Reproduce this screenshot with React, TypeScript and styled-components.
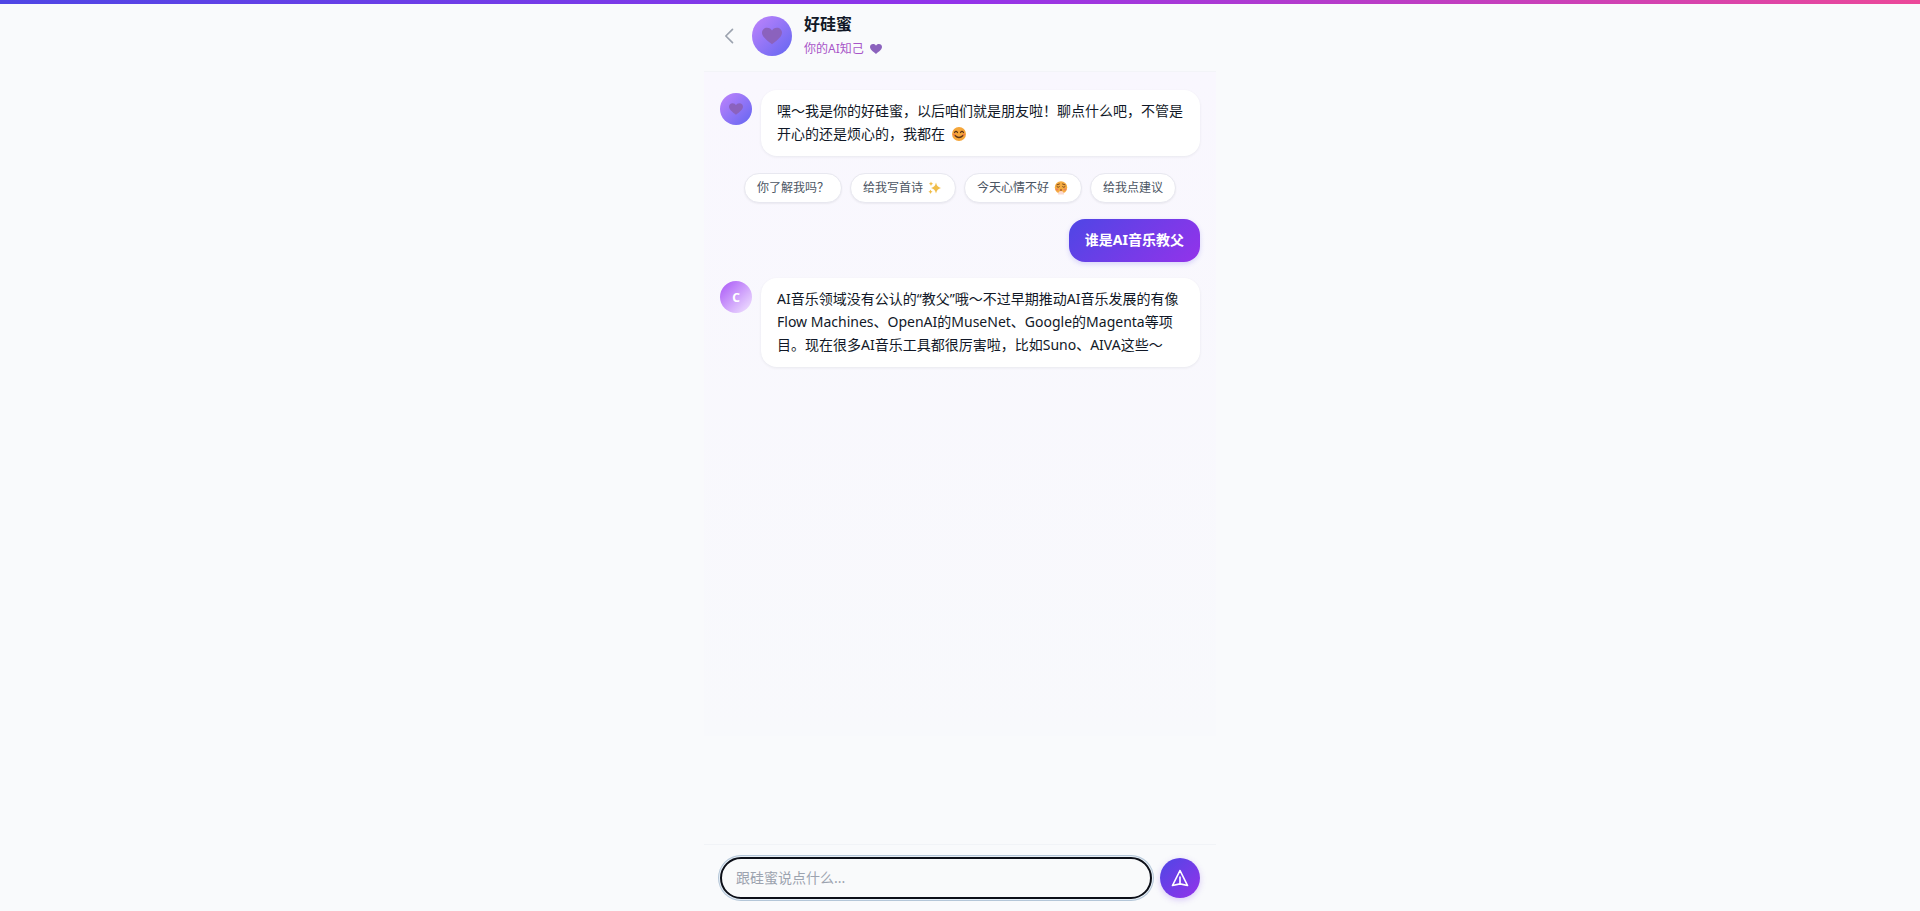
import React from "react";
import styled, { createGlobalStyle, css } from "styled-components";

const Global = createGlobalStyle`
  *, *::before, *::after { box-sizing: border-box; }
  body {
    margin: 0;
    background: #f9fafc;
    color: #111827;
    font-family: "Noto Sans", "Noto Sans CJK SC", sans-serif;
    font-size: 14px;
    line-height: 23px;
  }
  button, input { font: inherit; }
`;

const Page = styled.div`
  display: flex;
  flex-direction: column;
  min-height: 100vh;
`;

const TopBar = styled.div`
  height: 4px;
  background: linear-gradient(90deg, #4f46e5, #9333ea 50%, #ec4899);
`;

const Column = styled.div`
  display: flex;
  flex-direction: column;
  flex: 1;
  width: 100%;
  max-width: 512px;
  margin: 0 auto;
`;

const Header = styled.header`
  display: flex;
  align-items: center;
  gap: 12px;
  padding: 7px 16px 10px;
  border-bottom: 1px solid #f3f4f8;
`;

const BackButton = styled.button`
  display: flex;
  width: 20px;
  padding: 0;
  border: 0;
  background: none;
  color: #9ca3af;
  cursor: pointer;
`;

const Titles = styled.div`
  display: flex;
  flex-direction: column;
`;

const Name = styled.h1`
  margin: 0;
  font-size: 16px;
  line-height: 26px;
  font-weight: 700;
`;

const Tagline = styled.p`
  display: flex;
  align-items: center;
  gap: 6px;
  margin: 0;
  font-size: 12px;
  line-height: 24px;
  color: #a855c8;
`;

const Avatar = styled.span<{ $large?: boolean; $pale?: boolean }>`
  display: flex;
  flex: none;
  align-items: center;
  justify-content: center;
  width: ${(p) => (p.$large ? 40 : 32)}px;
  height: ${(p) => (p.$large ? 40 : 32)}px;
  border-radius: 50%;
  background: ${(p) =>
    p.$pale
      ? "linear-gradient(135deg, #a855f7, #f3e8ff)"
      : "linear-gradient(135deg, #c084fc, #6366f1)"};
  color: #fff;
  font-size: 12px;
  font-weight: 700;
`;

const Chat = styled.main`
  flex: 1;
  display: flex;
  flex-direction: column;
  gap: 16px;
  padding: 18px 16px;
  background: linear-gradient(#f9f7fe, #f8f9fc) no-repeat top / 100% 664px;
`;

const Message = styled.div<{ $own?: boolean }>`
  display: flex;
  gap: 9px;
  justify-content: ${(p) => (p.$own ? "flex-end" : "flex-start")};
  ${Avatar} { margin-top: 3px; }
`;

const Bubble = styled.p<{ $own?: boolean }>`
  margin: 0;
  padding: 9px 16px 11px;
  border-radius: 16px;
  ${(p) =>
    p.$own
      ? css`
          background: linear-gradient(135deg, #4f46e5, #9333ea);
          color: #fff;
          font-weight: 700;
          box-shadow: 0 2px 5px rgba(79, 70, 229, 0.2);
        `
      : css`
          flex: 1;
          background: #fff;
          box-shadow: 0 1px 3px rgba(17, 24, 39, 0.07);
        `}
`;

const Chips = styled.div`
  display: flex;
  flex-wrap: wrap;
  gap: 8px;
  padding: 1px 0 0 24px;
`;

const Chip = styled.button`
  display: flex;
  align-items: center;
  gap: 4px;
  padding: 5px 12px;
  border: 1px solid #e8e8f0;
  border-radius: 15px;
  background: #fff;
  color: #4b5563;
  font-size: 12px;
  line-height: 18px;
  box-shadow: 0 1px 2px rgba(17, 24, 39, 0.06);
  cursor: pointer;
`;

const Composer = styled.form`
  display: flex;
  align-items: center;
  gap: 8px;
  padding: 12px 16px;
  border-top: 1px solid #f1f3f7;
`;

const MessageInput = styled.input`
  flex: 1;
  min-width: 0;
  height: 42px;
  padding: 0 14px 2px;
  border: 2px solid #0c0f18;
  border-radius: 21px;
  outline: 0;
  background: #f9fafb;
  color: #111827;
  box-shadow: 0 0 0 1px #e6eef6, 0 0 0 2px #b4c6d8;
  &::placeholder { color: #9ca3af; opacity: 1; }
`;

const SendButton = styled.button`
  display: flex;
  align-items: center;
  justify-content: center;
  width: 40px;
  height: 40px;
  padding: 0;
  border: 0;
  border-radius: 50%;
  background: linear-gradient(135deg, #4f46e5, #9333ea);
  box-shadow: 0 2px 6px rgba(124, 58, 237, 0.25);
  cursor: pointer;
`;

const InlineIcon = styled.svg`
  margin-left: 2px;
  vertical-align: -3px;
`;

const Heart = ({ size }: { size: number }) => (
  <svg width={size} height={size} viewBox="0 0 24 24" aria-hidden="true">
    <path
      d="M12 22C10 19.600 0 14 0 8 0 4.500 2.800 2 6 2 9 2 11 3.300 12 5.500 13 3.300 15 2 18 2 21.200 2 24 4.500 24 8 24 14 14 19.600 12 22Z"
      fill="#8b62bd"
    />
  </svg>
);

const Smile = () => (
  <InlineIcon width="16" height="16" viewBox="0 0 16 16" role="img" aria-label="微笑">
    <circle cx="8" cy="8" r="7" fill="#f5a63a" />
    <path d="M3.500 6.500q1.500-2.200 3 0M9.500 6.500q1.500-2.200 3 0M4 9.500q4 4 8 0" fill="none" stroke="#5b3218" strokeWidth="1.200" strokeLinecap="round" />
    <ellipse cx="3.200" cy="8.600" rx="1.300" ry="0.900" fill="#f2784b" />
    <ellipse cx="12.800" cy="8.600" rx="1.300" ry="0.900" fill="#f2784b" />
  </InlineIcon>
);

const Pleading = () => (
  <svg width="16" height="16" viewBox="0 0 16 16" role="img" aria-label="难过">
    <circle cx="8" cy="7.500" r="6.200" fill="#f5ac40" />
    <path d="M4 4.800l2.400-.8M12 4.800l-2.400-.8M4 6.800q1.200 1.200 2.400 0M9.600 6.800q1.200 1.200 2.400 0" fill="none" stroke="#6b3a1c" strokeWidth="0.900" strokeLinecap="round" />
    <ellipse cx="4" cy="9.400" rx="1.400" ry="1" fill="#f0805a" />
    <ellipse cx="12" cy="9.400" rx="1.400" ry="1" fill="#f0805a" />
    <path d="M5 14.500q0-3.500 3-3.500t3 3.500z" fill="#fbd9d0" />
    <path d="M7 10.200q1-.8 2 0" fill="none" stroke="#8a3a24" />
  </svg>
);

const Sparkles = () => (
  <svg width="16" height="16" viewBox="0 0 16 16" role="img" aria-label="闪光">
    <path d="M9 2.500q.9 4.600 5 5.500-4.100.9-5 5.500-.9-4.600-5-5.500 4.100-.9 5-5.500z" fill="#f0bd48" />
    <path d="M4 1.500q.3 2 2.100 2.300Q4.300 4.200 4 6.100 3.700 4.200 1.900 3.800 3.700 3.500 4 1.500zM3.500 9.500q.3 2 2.100 2.300-1.800.4-2.100 2.300-.3-1.900-2.100-2.300 1.800-.3 2.100-2.300z" fill="#f0bd48" />
  </svg>
);

export default function App() {
  return (
    <Page>
      <Global />
      <TopBar />
      <Column>
        <Header>
          <BackButton type="button" aria-label="返回">
            <svg width="20" height="20" viewBox="0 0 24 24" fill="none" stroke="currentColor" strokeWidth="2" strokeLinecap="round" strokeLinejoin="round">
              <path d="M15 20l-8-8 8-8" />
            </svg>
          </BackButton>
          <Avatar $large><Heart size={20} /></Avatar>
          <Titles>
            <Name>好硅蜜</Name>
            <Tagline>你的AI知己 <Heart size={12} /></Tagline>
          </Titles>
        </Header>
        <Chat>
          <Message>
            <Avatar><Heart size={14} /></Avatar>
            <Bubble>嘿～我是你的好硅蜜，以后咱们就是朋友啦！聊点什么吧，不管是开心的还是烦心的，我都在 <Smile /></Bubble>
          </Message>
          <Chips>
            <Chip type="button">你了解我吗？</Chip>
            <Chip type="button">给我写首诗 <Sparkles /></Chip>
            <Chip type="button">今天心情不好 <Pleading /></Chip>
            <Chip type="button">给我点建议</Chip>
          </Chips>
          <Message $own>
            <Bubble $own>谁是AI音乐教父</Bubble>
          </Message>
          <Message>
            <Avatar $pale>C</Avatar>
            <Bubble>AI音乐领域没有公认的“教父”哦～不过早期推动AI音乐发展的有像Flow Machines、OpenAI的MuseNet、Google的Magenta等项目。现在很多AI音乐工具都很厉害啦，比如Suno、AIVA这些～</Bubble>
          </Message>
        </Chat>
        <Composer onSubmit={(e) => e.preventDefault()}>
          <MessageInput type="text" aria-label="消息" placeholder="跟硅蜜说点什么..." />
          <SendButton type="submit" aria-label="发送">
            <svg width="20" height="20" viewBox="0 0 24 24" fill="none" stroke="#fff" strokeWidth="2" strokeLinecap="round" strokeLinejoin="round">
              <path d="M12 19l9 2-9-18-9 18 9-2zm0 0v-8" />
            </svg>
          </SendButton>
        </Composer>
      </Column>
    </Page>
  );
}
